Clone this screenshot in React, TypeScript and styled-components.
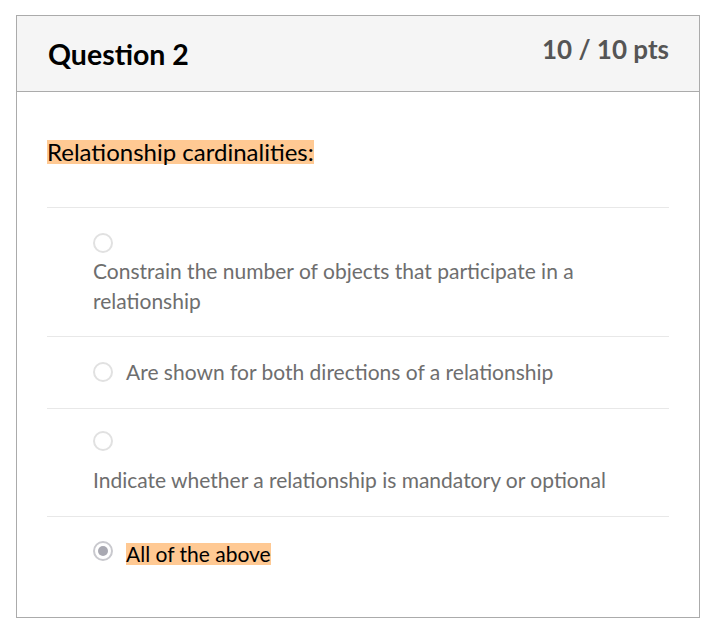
import React from "react";
import styled, { createGlobalStyle } from "styled-components";

const Global = createGlobalStyle`
  html, body { margin: 0; padding: 0; background: #fff; }
  body { font-family: Lato, "Noto Sans", sans-serif; }
`;

const Page = styled.div`
  padding: 15px 0 0 16px;
`;

const Card = styled.div`
  width: 682px;
  border: 1px solid #ababab;
  background: #fff;
`;

const Header = styled.div`
  height: 75px;
  background: #f5f5f5;
  border-bottom: 1px solid #ababab;
  display: flex;
  justify-content: space-between;
  align-items: flex-start;
  padding: 0 30px 0 31px;
`;

const Title = styled.h2`
  margin: 0;
  padding-top: 21px;
  font-size: 28.5px;
  font-weight: 700;
  color: #000;
  line-height: 34px;
`;

const Points = styled.div`
  padding-top: 18px;
  font-size: 26px;
  font-weight: 700;
  color: #555;
  line-height: 30px;
`;

const Body = styled.div`
  padding: 42px 30px 31px 30px;
`;

const QuestionText = styled.div`
  font-size: 24px;
  line-height: 30px;
  color: #000;
  padding-bottom: 43px;
  border-bottom: 1px solid #e8e8e8;
`;

const Highlight = styled.span<{ $h: number; $shift?: number }>`
  display: inline-block;
  line-height: ${(p) => p.$h}px;
  vertical-align: ${(p) => (p.$shift ? `${p.$shift}px` : "middle")};
  background: #ffc993;
  color: #000;
`;

const Answer = styled.div<{ $top: number; $bottom: number; $last?: boolean }>`
  padding: ${(p) => p.$top}px 0 ${(p) => p.$bottom}px 46px;
  border-bottom: ${(p) => (p.$last ? "none" : "1px solid #e8e8e8")};
`;

const Row = styled.div`
  display: flex;
  align-items: center;
  gap: 13px;
  height: 30px;
`;

const RadioLine = styled.div<{ $gap: number }>`
  height: 24px;
  display: flex;
  align-items: center;
  margin-bottom: ${(p) => p.$gap}px;
`;

const Radio = styled.span<{ $checked?: boolean }>`
  box-sizing: border-box;
  width: 20px;
  height: 20px;
  border-radius: 50%;
  border: 2px solid ${(p) => (p.$checked ? "#c9c9ce" : "#e1e1e1")};
  background: #fff;
  display: inline-flex;
  align-items: center;
  justify-content: center;
  flex: none;
  &::after {
    content: "";
    display: ${(p) => (p.$checked ? "block" : "none")};
    width: 10px;
    height: 10px;
    border-radius: 50%;
    background: #a9a9b2;
  }
`;

const AnswerText = styled.div`
  font-size: 21px;
  line-height: 30px;
  color: #6e6e6e;
`;

export default function App() {
  return (
    <Page>
      <Global />
      <Card>
        <Header>
          <Title>Question 2</Title>
          <Points>10 / 10 pts</Points>
        </Header>
        <Body>
          <QuestionText>
            <Highlight $h={24}>Relationship cardinalities:</Highlight>
          </QuestionText>
          <Answer $top={23} $bottom={20}>
            <RadioLine $gap={1}>
              <Radio />
            </RadioLine>
            <AnswerText>
              Constrain the number of objects that participate in a relationship
            </AnswerText>
          </Answer>
          <Answer $top={20} $bottom={21}>
            <Row>
              <Radio />
              <AnswerText>Are shown for both directions of a relationship</AnswerText>
            </Row>
          </Answer>
          <Answer $top={20} $bottom={21}>
            <RadioLine $gap={12}>
              <Radio />
            </RadioLine>
            <AnswerText>
              Indicate whether a relationship is mandatory or optional
            </AnswerText>
          </Answer>
          <Answer $top={19} $bottom={20} $last>
            <Row>
              <Radio $checked />
              <AnswerText>
                <Highlight $h={22} $shift={-3}>All of the above</Highlight>
              </AnswerText>
            </Row>
          </Answer>
        </Body>
      </Card>
    </Page>
  );
}
